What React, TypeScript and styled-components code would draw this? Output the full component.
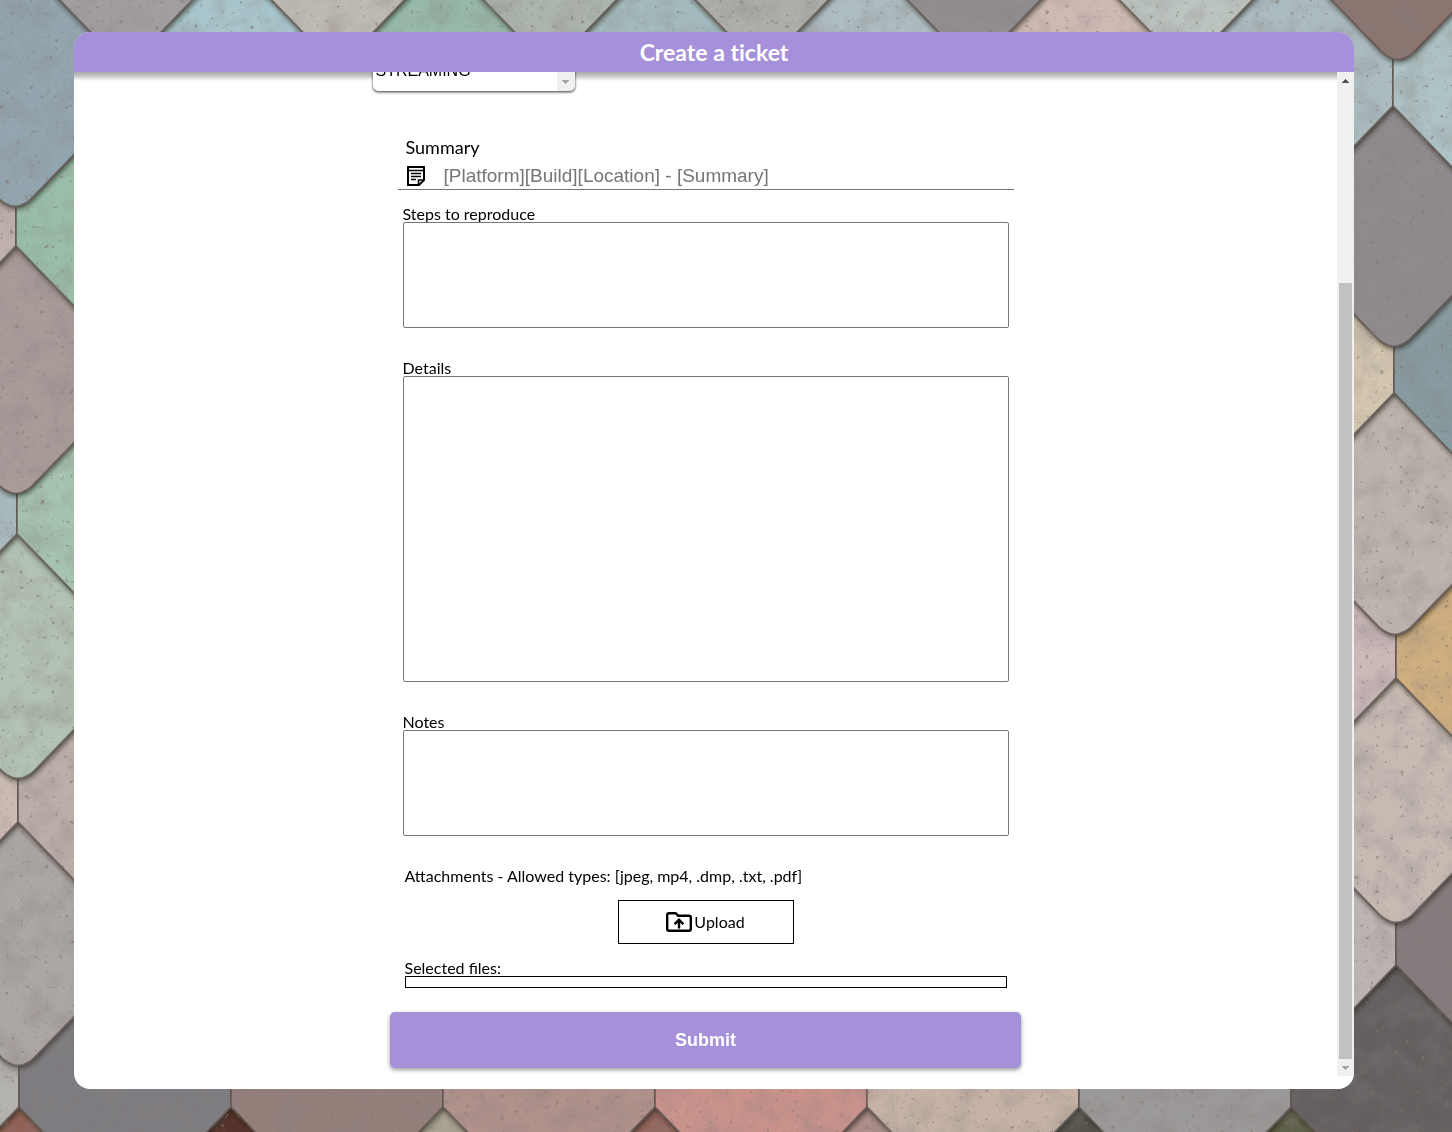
import React from "react";
import styled, { createGlobalStyle } from "styled-components";

const GlobalStyle = createGlobalStyle`
  *, *::before, *::after { box-sizing: border-box; }
  body { margin: 0; background: #8d8886; }
`;

const labelFont = `Lato, "Open Sans", sans-serif`;
const controlFont = `"Liberation Sans", Arial, sans-serif`;
const violet = "#a690da";

const Backdrop = styled.svg`
  position: fixed;
  inset: 0;
  width: 100%;
  height: 100%;
  z-index: -1;
`;

const Page = styled.main`
  height: 100vh;
  display: flex;
  padding: 32px 98px 43px 74px;
`;

const Panel = styled.section`
  flex: 1;
  min-width: 0;
  display: flex;
  flex-direction: column;
  padding-bottom: 13px;
  border-radius: 16px;
  overflow: hidden;
  background: #fff;
`;

const Header = styled.header`
  display: flex;
  flex: none;
  align-items: center;
  justify-content: center;
  height: 40px;
  background: ${violet};
  color: #fff;
`;

const Title = styled.h1`
  margin: 0;
  font: 700 23px/28px ${labelFont};
  font-variant-ligatures: none;
`;

const Body = styled.div`
  flex: 1;
  min-height: 0;
  display: flex;
`;

const Viewport = styled.div`
  position: relative;
  flex: 1;
  min-width: 0;
  display: flex;
  flex-direction: column-reverse;
  overflow-y: auto;
  scrollbar-width: none;
`;

const HeaderShade = styled.div`
  position: sticky;
  top: 0;
  order: 1;
  flex: none;
  height: 9px;
  margin-bottom: -9px;
  background: linear-gradient(rgba(0, 0, 0, 0.34), rgba(0, 0, 0, 0.24) 40%, rgba(0, 0, 0, 0));
`;

const Form = styled.form`
  display: flex;
  flex: none;
  flex-direction: column;
  align-items: center;
  padding-bottom: 8px;
`;

const Stack = styled.div<{ $width: number; $gap: number }>`
  display: flex;
  flex-direction: column;
  width: min(${(p) => p.$width}px, 100%);
  margin-bottom: ${(p) => p.$gap}px;
`;

const Label = styled.label<{ $large?: boolean }>`
  padding-left: ${(p) => (p.$large ? 8 : 0)}px;
  font: 400 ${(p) => (p.$large ? 18 : 16)}px/${(p) => (p.$large ? 28 : 16)}px ${labelFont};
  color: #000;
`;

const Caption = styled(Label).attrs({ as: "p" })`
  margin: 0;
`;

const Picker = styled.div`
  display: flex;
  width: 202px;
  height: 40px;
  border-radius: 5px;
  overflow: hidden;
`;

const PickerRow = styled.div`
  width: min(666px, 100%);
  margin-bottom: 42px;
  filter: drop-shadow(0 1px 1px rgba(0, 0, 0, 0.6)) drop-shadow(0 1px 1px rgba(0, 0, 0, 0.25));
`;

const Select = styled.select`
  appearance: none;
  flex: 1;
  min-width: 0;
  padding: 0 3px;
  border: 0;
  background: #fff;
  color: #000;
  font: 16px/20px ${controlFont};
`;

const PickerArrow = styled.span`
  display: flex;
  align-items: flex-end;
  justify-content: center;
  width: 18px;
  padding-bottom: 7px;
  background: #f0f0f0;
`;

const Field = styled.div`
  display: flex;
  align-items: center;
  gap: 19px;
  height: 29px;
  padding: 2px 0 0 9px;
  border-bottom: 1px solid #767676;
`;

const TextInput = styled.input`
  flex: 1;
  min-width: 0;
  height: 24px;
  padding: 0;
  border: 0;
  background: none;
  font: 19px/24px ${controlFont};
  &::placeholder { color: #757575; opacity: 1; }
`;

const TextArea = styled.textarea<{ $height: number }>`
  display: block;
  height: ${(p) => p.$height}px;
  padding: 2px;
  border: 1px solid #767676;
  border-radius: 2px;
  background: #fff;
  resize: none;
  font: 16px/20px ${controlFont};
`;

const UploadButton = styled.button`
  display: flex;
  align-items: center;
  justify-content: center;
  gap: 2px;
  width: 176px;
  height: 44px;
  margin-bottom: 16px;
  padding: 0;
  border: 1px solid #000;
  background: #fff;
  color: #000;
  font: 400 16px/20px ${labelFont};
`;

const FileList = styled.output`
  display: block;
  height: 12px;
  border: 1px solid #000;
`;

const Submit = styled.button`
  width: 50%;
  height: 56px;
  border: 0;
  border-radius: 5px;
  background: ${violet};
  color: #fff;
  box-shadow: 0 2px 4px rgba(0, 0, 0, 0.4);
  font: 700 18px/24px ${controlFont};
`;

const Scrollbar = styled.div`
  display: flex;
  flex-direction: column;
  width: 17px;
  background: #f0f0f0;
`;

const ScrollArrow = styled.span`
  display: flex;
  flex: none;
  align-items: center;
  justify-content: center;
  height: 17px;
`;

const Track = styled.div`
  display: flex;
  flex: 1;
  flex-direction: column;
  justify-content: flex-end;
  padding: 0 2px;
`;

const Thumb = styled.div`
  height: 80%;
  background: #c1c1c1;
`;

function Triangle({ up, color }: { up?: boolean; color: string }) {
  return (
    <svg width="7" height="4" viewBox="0 0 7 4" aria-hidden="true" shapeRendering="crispEdges">
      <path d={up ? "M0 4 3.5 0 7 4Z" : "M0 0H7L3.5 4Z"} fill={color} />
    </svg>
  );
}

function NoteIcon() {
  return (
    <svg width="18" height="20" viewBox="0 0 18 20" fill="none" stroke="#000" aria-hidden="true">
      <path d="M1 1H17V14L12 19H1Z" strokeWidth="2" />
      <path d="M1 4.5H17" strokeWidth="1.5" />
      <path d="M4 7.5H14M4 10.5H14M4 13.5H9" strokeWidth="1.6" />
      <path d="M11.5 18.5V14H16.5" strokeWidth="1.6" />
    </svg>
  );
}

function FolderUploadIcon() {
  return (
    <svg width="26" height="20" viewBox="0 0 26 20" fill="none" stroke="#000" aria-hidden="true">
      <path
        d="M3 1.2H9.6L12.3 3.8H23Q24.8 3.8 24.8 5.6V17Q24.8 18.8 23 18.8H3Q1.2 18.8 1.2 17V3Q1.2 1.2 3 1.2Z"
        strokeWidth="2.4"
        strokeLinejoin="round"
      />
      <path d="M13 16.4V9M8.6 12.2 13 7.8 17.4 12.2" strokeWidth="2.4" />
    </svg>
  );
}

type Row = { top: number; first: number; colors: string[] };

const rows: Row[] = [
  { top: 1105, first: 18, colors: ["#925f53", "#57302c", "#aaa593", "#94655c", "#ae8e8a", "#57524e", "#5f6048", "#514b4b"] },
  { top: 964, first: -87, colors: ["#b4b3ae", "#7e7b80", "#957f7a", "#b0918b", "#c9928b", "#c6b2a6", "#9c9999", "#655f5f"] },
  { top: 822, first: 18, colors: ["#aca6a5", "", "", "", "", "", "#bbb4b3", "#857a7b"] },
  { top: 679, first: -88, colors: ["#cbbcb3", "#bbafaa", "", "", "", "", "", "#c6bbb3"] },
  { top: 535, first: 18, colors: ["#b2c2b3", "", "", "", "", "", "#ccbab9", "#cfae80"] },
  { top: 391, first: -89, colors: ["#a8b9be", "#a5c3af", "", "", "", "", "", "#beb4ae"] },
  { top: 250, first: 16, colors: ["#a89c99", "", "", "", "", "", "#d3c6b0", "#879ba0"] },
  { top: 103, first: -90, colors: ["#c2b3af", "#99bda7", "", "", "", "", "", "#8f8a8e"] },
  { top: -37, first: 15, colors: ["#93a5af", "#a8c5cc", "#97b9a8", "#a4bbbe", "#aebdc1", "#d0b9b4", "#abbbbf", "#aec3c5"] },
  { top: -184, first: -86, colors: ["#8b9ea9", "#a19da0", "#bfb9b3", "#abb5ac", "#adb0aa", "#928d91", "#bbc4bf", "#8b746f"] },
];

function tilePath(x: number, y: number) {
  return `M${x - 106} ${y - 12}H${x + 106}V${y + 143}L${x + 21} ${y + 231}Q${x} ${y + 256} ${x - 21} ${y + 231}L${x - 106} ${y + 143}Z`;
}

function SlateWall() {
  return (
    <Backdrop viewBox="0 0 1452 1132" preserveAspectRatio="xMidYMid slice" aria-hidden="true">
      <defs>
        <filter id="cast" x="-10%" y="-10%" width="120%" height="120%">
          <feDropShadow dx="1" dy="2" stdDeviation="2.5" floodColor="#1d1a18" floodOpacity="0.7" />
        </filter>
        <filter id="mottle" x="0" y="0" width="100%" height="100%">
          <feTurbulence type="fractalNoise" baseFrequency="0.04" numOctaves="6" seed="8" />
          <feColorMatrix values="0 0 0 0 0.25  0 0 0 0 0.22  0 0 0 0 0.22  1.6 0 0 0 -0.66" />
        </filter>
        <filter id="pits" x="0" y="0" width="100%" height="100%">
          <feTurbulence type="fractalNoise" baseFrequency="0.2" numOctaves="3" seed="21" />
          <feColorMatrix values="0 0 0 0 0.22  0 0 0 0 0.18  0 0 0 0 0.16  6 0 0 0 -4.1" />
        </filter>
      </defs>
      <rect width="1452" height="1132" fill="#4a4442" />
      {rows.map((row) => (
        <g key={row.top} filter="url(#cast)">
          {row.colors.map((color, i) =>
            color ? (
              <path
                key={i}
                d={tilePath(row.first + i * 212, row.top)}
                fill={color}
                stroke="#5b504b"
                strokeWidth="2"
                strokeOpacity="0.7"
              />
            ) : null
          )}
        </g>
      ))}
      <rect width="1452" height="1132" filter="url(#mottle)" opacity="0.45" />
      <rect width="1452" height="1132" filter="url(#pits)" opacity="0.7" />
    </Backdrop>
  );
}

export default function App() {
  return (
    <>
      <GlobalStyle />
      <SlateWall />
      <Page>
        <Panel>
          <Header>
            <Title>Create a ticket</Title>
          </Header>
          <Body>
            <Viewport>
              <HeaderShade />
              <Form onSubmit={(e) => e.preventDefault()}>
                <PickerRow>
                  <Picker>
                    <Select aria-label="Platform" defaultValue="STREAMING">
                      <option>STREAMING</option>
                    </Select>
                    <PickerArrow>
                      <Triangle color="#a3a3a3" />
                    </PickerArrow>
                  </Picker>
                </PickerRow>
                <Stack $width={616} $gap={16}>
                  <Label $large htmlFor="summary">Summary</Label>
                  <Field>
                    <NoteIcon />
                    <TextInput id="summary" placeholder="[Platform][Build][Location] - [Summary]" />
                  </Field>
                </Stack>
                <Stack $width={606} $gap={32}>
                  <Label htmlFor="steps">Steps to reproduce</Label>
                  <TextArea id="steps" $height={106} />
                </Stack>
                <Stack $width={606} $gap={32}>
                  <Label htmlFor="details">Details</Label>
                  <TextArea id="details" $height={306} />
                </Stack>
                <Stack $width={606} $gap={32}>
                  <Label htmlFor="notes">Notes</Label>
                  <TextArea id="notes" $height={106} />
                </Stack>
                <Stack $width={602} $gap={16}>
                  <Caption>Attachments - Allowed types: [jpeg, mp4, .dmp, .txt, .pdf]</Caption>
                </Stack>
                <UploadButton type="button">
                  <FolderUploadIcon />
                  Upload
                </UploadButton>
                <Stack $width={602} $gap={24}>
                  <Label htmlFor="files">Selected files:</Label>
                  <FileList id="files" />
                </Stack>
                <Submit type="submit">Submit</Submit>
              </Form>
            </Viewport>
            <Scrollbar aria-hidden="true">
              <ScrollArrow>
                <Triangle up color="#505050" />
              </ScrollArrow>
              <Track>
                <Thumb />
              </Track>
              <ScrollArrow>
                <Triangle color="#a3a3a3" />
              </ScrollArrow>
            </Scrollbar>
          </Body>
        </Panel>
      </Page>
    </>
  );
}
